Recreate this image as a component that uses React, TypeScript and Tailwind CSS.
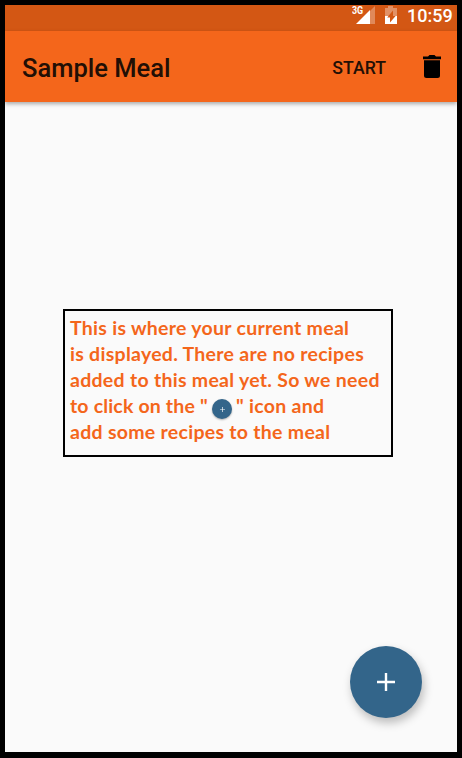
function StatusBar() {
  return (
    <div className="flex h-[26px] shrink-0 items-start justify-end bg-[#d35714] pr-[4px] text-white">
      <div className="relative mt-px h-[18px] w-[24px]">
        <svg className="absolute left-[4px] top-0" width="19" height="18" viewBox="0 0 19 18">
          <path d="M19 0V18H14V5Z" fill="#fff" fillOpacity=".3" />
          <path d="M14 4V18H0Z" fill="#fff" />
        </svg>
        <span className="absolute left-0 top-0 origin-left scale-x-[0.85] text-[10.500px] font-bold leading-[10px]">3G</span>
      </div>
      <svg className="ml-[8px] mt-px" width="14" height="19" viewBox="0 0 14 19">
        <path d="M4 0h5v2h4V11H1V2h3Z" fill="#fff" fillOpacity=".35" />
        <path d="M1 10h12v8H1Z" fill="#fff" />
        <path d="M9 4.500V10h2.600L6 16.500v-5H3.200Z" fill="#d35714" />
      </svg>
      <span className="ml-[9px] w-[46px] whitespace-nowrap text-[18px] font-medium leading-[22px]">10:59</span>
    </div>
  );
}

function Toolbar() {
  return (
    <header className="z-10 flex h-[71px] shrink-0 items-center bg-[#f4661b] pl-[17px] pr-[15px] text-[#220f05] shadow-[0_2px_4px_rgba(0,0,0,0.32)]">
      <h1 className="mt-[2px] text-[25.500px] font-medium leading-8">Sample Meal</h1>
      <button className="ml-auto mt-[3px] text-[17.700px] font-medium leading-6">START</button>
      <svg className="ml-[36px]" width="20" height="24" viewBox="0 0 20 24">
        <path d="M1 1.500h5L7.500 0h5L14 1.500h5v2.700H1ZM2 5.200h16V20.500q0 2.500-2.500 2.500h-11Q2 23 2 20.500Z" fill="#000" />
      </svg>
    </header>
  );
}

function AddIcon({ className }: { className: string }) {
  return (
    <svg className={className} viewBox="0 0 18 18">
      <path d="M7.800 0h2.400v7.800H18v2.400h-7.800V18H7.800v-7.800H0V7.800h7.800Z" fill="#fff" />
    </svg>
  );
}

export default function App() {
  return (
    <div className="flex h-[758px] w-[462px] flex-col overflow-hidden border-[5px] border-b-[6px] border-black bg-[#fafafa] font-['Roboto',sans-serif]">
      <StatusBar />
      <Toolbar />
      <main className="flex min-h-0 flex-1 flex-col items-start">
        <section className="ml-[58px] mt-[207px] h-[148px] w-[330px] whitespace-nowrap border-2 border-black pl-[5px] pt-[4px] font-['Lato',sans-serif] text-[19.500px] font-bold leading-[26px] tracking-[0.280px] text-[#f4661b]">
          <p>This is where your current meal</p>
          <p>is displayed. There are no recipes</p>
          <p>added to this meal yet. So we need</p>
          <p className="flex">
            <span className="w-[142px] tracking-[0.170px]">to click on the "</span>
            <span className="mt-[6px] flex size-5 items-center justify-center rounded-full bg-[#33658a] shadow-[0_1px_2px_rgba(0,0,0,0.3)]">
              <AddIcon className="size-[5px]" />
            </span>
            <span className="ml-[4px]">" icon and</span>
          </p>
          <p>add some recipes to the meal</p>
        </section>
        <button className="mb-[34px] mr-[35px] mt-auto flex size-[72px] items-center justify-center self-end rounded-full bg-[#33658a] shadow-[2px_5px_10px_rgba(0,0,0,0.25)]">
          <AddIcon className="size-[18px]" />
        </button>
      </main>
    </div>
  );
}
